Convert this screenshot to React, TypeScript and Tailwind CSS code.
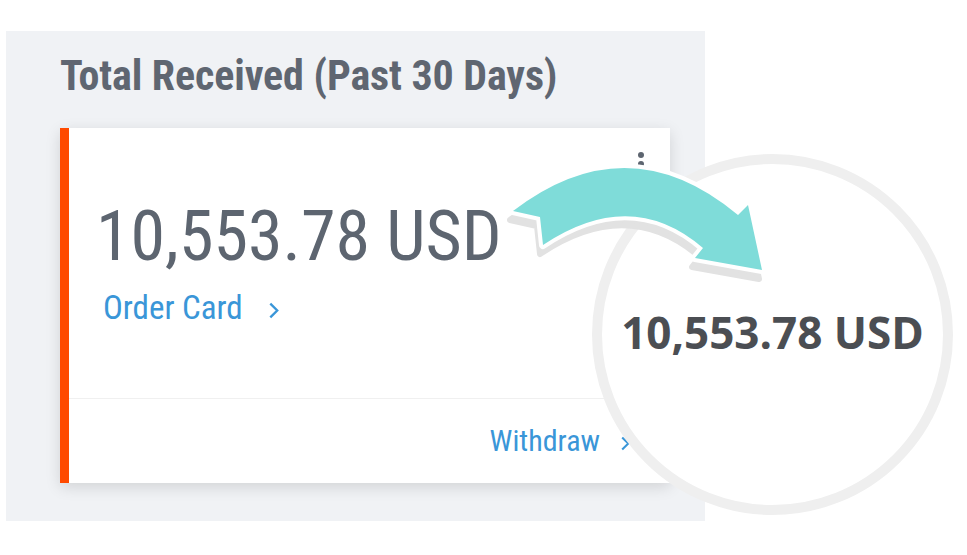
import React from "react"

const condensed = {
  fontFamily: '"Roboto Condensed", "Liberation Sans Narrow", "DejaVu Sans Condensed", Roboto, sans-serif',
}

function Chevron({ className }: { className?: string }) {
  return (
    <svg viewBox="0 0 10 16" className={className} fill="none" stroke="currentColor" strokeWidth="2.2">
      <path d="M2 1.5 L8.5 8 L2 14.5" />
    </svg>
  )
}

function Arrow() {
  const d =
    "M513 211 Q628 123 738 215 L748 205 L762 270 L695 258 L703 248 Q631 186 543 245 L540 217 Z"
  return (
    <svg className="pointer-events-none absolute left-0 top-0" width="967" height="555" viewBox="0 0 967 555">
      <path d={d} transform="translate(-3 9)" fill="#e2e2e2" stroke="#e2e2e2" strokeWidth="6" strokeLinejoin="round" />
      <path d={d} fill="#7fdcd9" stroke="#ffffff" strokeWidth="8" strokeLinejoin="round" paintOrder="stroke" />
    </svg>
  )
}

export default function App() {
  return (
    <div className="relative h-[555px] w-[967px] overflow-hidden bg-white">
      <section className="ml-[6px] mt-[31px] flex h-[490px] w-[699px] flex-col bg-[#f0f2f5] pl-[54px] pr-[35px]">
        <h2
          style={condensed}
          className="mt-[20px] text-[42px] font-bold leading-[50px] tracking-[-0.1px] text-[#5f6671]"
        >
          Total Received (Past 30 Days)
        </h2>
        <div className="mt-[27px] flex h-[355px] w-[610px] border-l-[9px] border-[#ff4a00] bg-white shadow-[0_4px_14px_rgba(0,0,0,0.13)]">
          <div className="flex flex-1 flex-col">
            <div className="relative h-[270px] pl-[27px] pt-[68px]">
              <div className="absolute right-[26px] top-[24px] flex flex-col gap-[3px]">
                <span className="h-[6px] w-[6px] rounded-full bg-[#5d6570]" />
                <span className="h-[6px] w-[6px] rounded-full bg-[#5d6570]" />
                <span className="h-[6px] w-[6px] rounded-full bg-[#5d6570]" />
              </div>
              <div style={condensed} className="text-[70px] font-normal leading-[80px] text-[#5d6570]">
                10,553.78 USD
              </div>
              <a style={condensed} className="mt-[12px] flex items-center gap-[25px] pl-[7px] text-[33px] leading-[40px] text-[#3a96d8]">
                Order Card
                <Chevron className="mt-[4px] h-[17px] w-[11px]" />
              </a>
            </div>
            <div className="h-px bg-[#f0f0f0]" />
            <div className="flex flex-1 items-center justify-end pr-[40px]">
              <a style={condensed} className="flex items-center gap-[20px] text-[30px] leading-[40px] text-[#3a96d8]">
                Withdraw
                <Chevron className="mt-[4px] h-[15px] w-[10px]" />
              </a>
            </div>
          </div>
        </div>
      </section>

      <div className="absolute left-[592px] top-[154px] flex h-[361px] w-[361px] items-center justify-center rounded-full border-[10px] border-[#efefef] bg-white">
        <span
          style={{ fontFamily: '"Open Sans", sans-serif' }}
          className="mt-[-6px] text-[44px] font-bold text-[#4b4e53]"
        >
          10,553.78 USD
        </span>
      </div>

      <Arrow />
    </div>
  )
}
